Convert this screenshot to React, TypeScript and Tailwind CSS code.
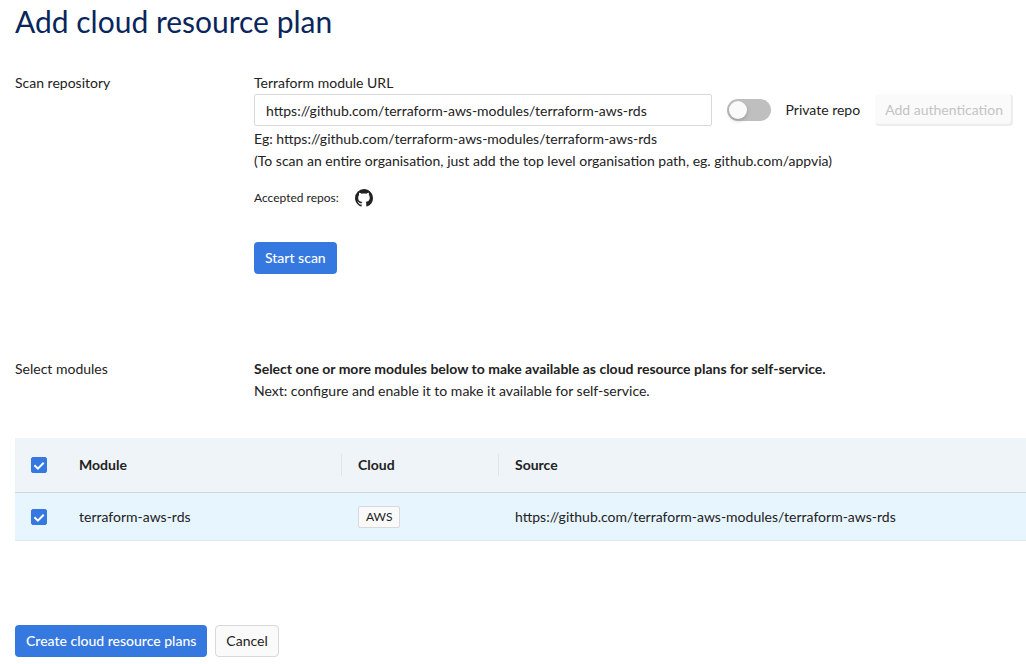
import { useState } from "react";
import { VscGithubInverted } from "react-icons/vsc";

const modules = [
  {
    name: "terraform-aws-rds",
    cloud: "AWS",
    source: "https://github.com/terraform-aws-modules/terraform-aws-rds",
  },
];

type CheckboxProps = {
  label: string;
  checked: boolean;
  onChange: (checked: boolean) => void;
};

const Checkbox = ({ label, checked, onChange }: CheckboxProps) => (
  <label className="grid size-4 cursor-pointer">
    <input
      type="checkbox"
      aria-label={label}
      checked={checked}
      onChange={(e) => onChange(e.target.checked)}
      className="peer col-start-1 row-start-1 size-4 appearance-none rounded-xs border border-[#d9d9d9] bg-white checked:border-[#3578e5] checked:bg-[#3578e0]"
    />
    <svg
      viewBox="0 0 16 16"
      className="invisible col-start-1 row-start-1 size-4 fill-none stroke-white stroke-2 peer-checked:visible">
      <path d="M3.4 8.3 L6.9 11.7 L12.7 5.7" />
    </svg>
  </label>
);

const App = () => {
  const [url, setUrl] = useState(modules[0].source);
  const [isPrivate, setIsPrivate] = useState(false);
  const [selected, setSelected] = useState(modules.map((m) => m.name));

  const toggle = (name: string, checked: boolean) =>
    setSelected(
      checked ? [...selected, name] : selected.filter((n) => n !== name)
    );

  return (
    <main className="bg-white pl-[15px] font-[Lato,sans-serif] text-sm/[22px] text-[#222]">
      <h1 className="pt-1 text-3xl/[34px] text-[#09265c]">
        Add cloud resource plan
      </h1>

      {/* scan repository */}
      <section className="mt-[34px] grid grid-cols-[239px_1fr] pr-[13px]">
        <h2>Scan repository</h2>
        <div>
          <label htmlFor="module-url" className="block">
            Terraform module URL
          </label>
          <div className="flex items-center gap-[15px]">
            <input
              id="module-url"
              type="text"
              value={url}
              onChange={(e) => setUrl(e.target.value)}
              className="h-8 min-w-0 flex-1 rounded-xs border border-[#d9d9d9] px-[11px] outline-none focus:border-[#3578e0]"
            />
            <input
              id="private-repo"
              type="checkbox"
              role="switch"
              checked={isPrivate}
              onChange={(e) => setIsPrivate(e.target.checked)}
              className="h-[22px] w-11 cursor-pointer appearance-none rounded-full bg-[#bfbfbf] p-0.5 before:block before:size-[18px] before:rounded-full before:bg-[#fafafa] before:shadow-[0_2px_4px_rgba(0,35,11,0.2)] checked:bg-[#3578e0] checked:before:ml-[22px]"
            />
            <label htmlFor="private-repo">Private repo</label>
            <button
              type="button"
              disabled={!isPrivate}
              className="h-8 rounded-sm bg-[#fafafa] px-2.5 shadow-[inset_-2px_-2px_1px_#ececec] disabled:text-[#c4c4c4]">
              Add authentication
            </button>
          </div>
          <p className="mt-0.5">
            Eg: https://github.com/terraform-aws-modules/terraform-aws-rds
          </p>
          <p>
            (To scan an entire organisation, just add the top level organisation
            path, eg. github.com/appvia)
          </p>
          <div className="mt-3.5 flex items-center gap-4 text-xs/6">
            <span>Accepted repos:</span>
            <VscGithubInverted className="size-[18px]" aria-label="GitHub" />
          </div>
          <button
            type="button"
            className="mt-8 h-8 rounded-sm bg-[#3578e0] px-[11px] font-medium text-white">
            Start scan
          </button>
        </div>
      </section>

      {/* select modules */}
      <section className="mt-21 grid grid-cols-[239px_1fr] pr-[13px]">
        <h2>Select modules</h2>
        <div>
          <p className="font-bold">
            Select one or more modules below to make available as cloud resource
            plans for self-service.
          </p>
          <p>Next: configure and enable it to make it available for self-service.</p>
        </div>
      </section>

      <table className="mt-9 w-full table-fixed border-separate border-spacing-0 text-left">
        <colgroup>
          <col className="w-12" />
          <col className="w-[279px]" />
          <col className="w-[157px]" />
          <col />
        </colgroup>
        <thead>
          <tr className="h-[55px] bg-[#eff4f8] *:border-b *:border-[#d3d6d8]">
            <th className="pl-4">
              <Checkbox
                label="Select all modules"
                checked={selected.length === modules.length}
                onChange={(checked) =>
                  setSelected(checked ? modules.map((m) => m.name) : [])
                }
              />
            </th>
            <th>
              <div className="border-r border-[#e0e5e9] px-4">Module</div>
            </th>
            <th>
              <div className="border-r border-[#e0e5e9] px-4">Cloud</div>
            </th>
            <th className="px-4">Source</th>
          </tr>
        </thead>
        <tbody>
          {modules.map((m) => (
            <tr
              key={m.name}
              className="h-12 bg-[#e7f5ff] *:border-b *:border-[#e0e8f0]">
              <td className="pl-4">
                <Checkbox
                  label={m.name}
                  checked={selected.includes(m.name)}
                  onChange={(checked) => toggle(m.name, checked)}
                />
              </td>
              <td className="px-4">{m.name}</td>
              <td className="px-4">
                <span className="inline-block rounded-xs border border-[#d9d9d9] bg-[#fafafa] px-[7px] text-xs/5">
                  {m.cloud}
                </span>
              </td>
              <td className="px-4">{m.source}</td>
            </tr>
          ))}
        </tbody>
      </table>

      <div className="mt-21 flex gap-2 pb-2">
        <button
          type="button"
          className="h-8 rounded-sm bg-[#3578e0] px-[11px] font-medium text-white">
          Create cloud resource plans
        </button>
        <button
          type="button"
          className="h-8 rounded-sm border border-[#d9d9d9] bg-[#fafafa] px-2.5">
          Cancel
        </button>
      </div>
    </main>
  );
};

export default App;
